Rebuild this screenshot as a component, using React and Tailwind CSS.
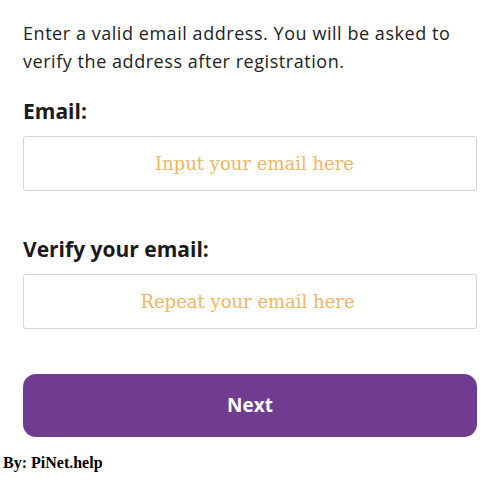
export default function App() {
  return (
    <div className="w-[500px] h-[482px] bg-white font-['Open_Sans',sans-serif] text-[#1c1c1c] overflow-hidden">
      <div className="pt-[19px] px-[23px]">
        <p className="text-[18px] leading-[28px] tracking-[0.55px] text-[#222]">
          Enter a valid email address. You will be asked to verify the address after registration.
        </p>
        <label className="block mt-[22px] text-[21px] leading-[28px] font-bold text-[#1a1a1a]">Email:</label>
        <input
          type="text"
          placeholder="Input your email here"
          className="mt-[11px] block w-full h-[55px] pl-[9px] border border-[#d4d4d4] rounded-[3px] bg-white text-center font-['DejaVu_Serif',serif] text-[18px] placeholder:text-[#f0b661] outline-none"
        />
        <label className="block mt-[44px] text-[21px] leading-[28px] font-bold text-[#1a1a1a]">Verify your email:</label>
        <input
          type="text"
          placeholder="Repeat your email here"
          className="mt-[11px] block w-full h-[55px] pr-[5px] border border-[#d4d4d4] rounded-[3px] bg-white text-center font-['DejaVu_Serif',serif] text-[18px] placeholder:text-[#f0b661] outline-none"
        />
        <button className="mt-[45px] block w-full h-[63px] rounded-[13px] bg-[#703c8f] text-white text-[19px] font-bold">
          Next
        </button>
      </div>
      <div className="mt-[16px] pl-[3px] font-['Liberation_Serif',serif] font-bold text-[16px] leading-[20px] text-black">
        By: PiNet.help
      </div>
    </div>
  );
}
